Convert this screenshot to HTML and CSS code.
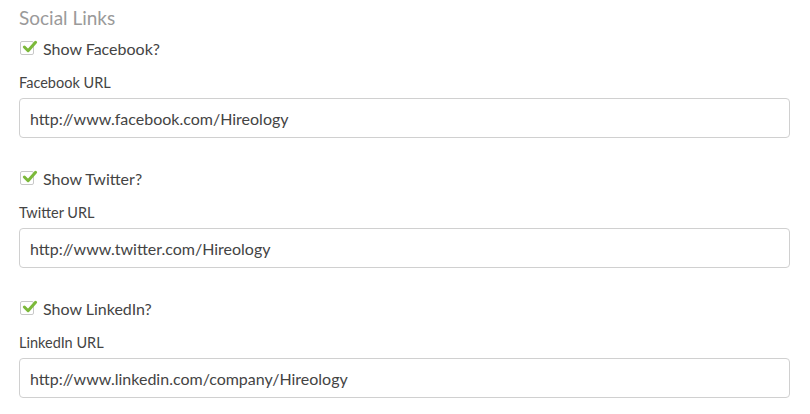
FILE: index.html
```html
<!DOCTYPE html>
<html>
<head>
<meta charset="utf-8">
<link rel="stylesheet" href="styles.css">
</head>
<body>
<div class="panel">
  <h2 class="title">Social Links</h2>

  <div class="group">
    <label class="check">
      <span class="box"><svg viewBox="0 0 16 16" width="17" height="15"><path d="M2.5 8.5 L6.5 12.5 L14.5 3.5" fill="none" stroke="#7cb93a" stroke-width="3.2" stroke-linecap="round" stroke-linejoin="round"/></svg></span>
      <span class="check-text">Show Facebook?</span>
    </label>
    <div class="field-label">Facebook URL</div>
    <div class="input">http://www.facebook.com/Hireology</div>
  </div>

  <div class="group">
    <label class="check">
      <span class="box"><svg viewBox="0 0 16 16" width="17" height="15"><path d="M2.5 8.5 L6.5 12.5 L14.5 3.5" fill="none" stroke="#7cb93a" stroke-width="3.2" stroke-linecap="round" stroke-linejoin="round"/></svg></span>
      <span class="check-text">Show Twitter?</span>
    </label>
    <div class="field-label">Twitter URL</div>
    <div class="input">http://www.twitter.com/Hireology</div>
  </div>

  <div class="group">
    <label class="check">
      <span class="box"><svg viewBox="0 0 16 16" width="17" height="15"><path d="M2.5 8.5 L6.5 12.5 L14.5 3.5" fill="none" stroke="#7cb93a" stroke-width="3.2" stroke-linecap="round" stroke-linejoin="round"/></svg></span>
      <span class="check-text">Show LinkedIn?</span>
    </label>
    <div class="field-label">LinkedIn URL</div>
    <div class="input">http://www.linkedin.com/company/Hireology</div>
  </div>
</div>
</body>
</html>
```
FILE: styles.css
```css
html, body {
  margin: 0;
  padding: 0;
  background: #fff;
}
body {
  font-family: Lato, "Open Sans", sans-serif;
  color: #444;
}
.panel {
  padding: 5px 20px 0 19px;
  display: flex;
  flex-direction: column;
}
.title {
  margin: 0;
  font-size: 19px;
  font-weight: 400;
  color: #9a9a9a;
  line-height: 25px;
  padding-left: 0;
}
.group {
  display: flex;
  flex-direction: column;
  margin-bottom: 22px;
}
.check {
  display: flex;
  align-items: center;
  gap: 9px;
  height: 24px;
  margin-top: 6px;
  padding-left: 1px;
}
.box {
  position: relative;
  width: 14px;
  height: 14px;
  border: 1px solid #c8c8c8;
  border-radius: 2px;
  box-sizing: border-box;
  background: #fff;
}
.box svg {
  position: absolute;
  left: 0;
  top: -3px;
}
.check-text {
  font-size: 16px;
  color: #444;
}
.field-label {
  font-size: 14.5px;
  color: #444;
  line-height: 18px;
  margin-top: 14px;
  padding-left: 0;
}
.input {
  margin-top: 6px;
  height: 40px;
  box-sizing: border-box;
  border: 1px solid #d0d0d0;
  border-radius: 4px;
  padding: 0 10px;
  display: flex;
  align-items: center;
  font-size: 16px;
  color: #444;
}
```
